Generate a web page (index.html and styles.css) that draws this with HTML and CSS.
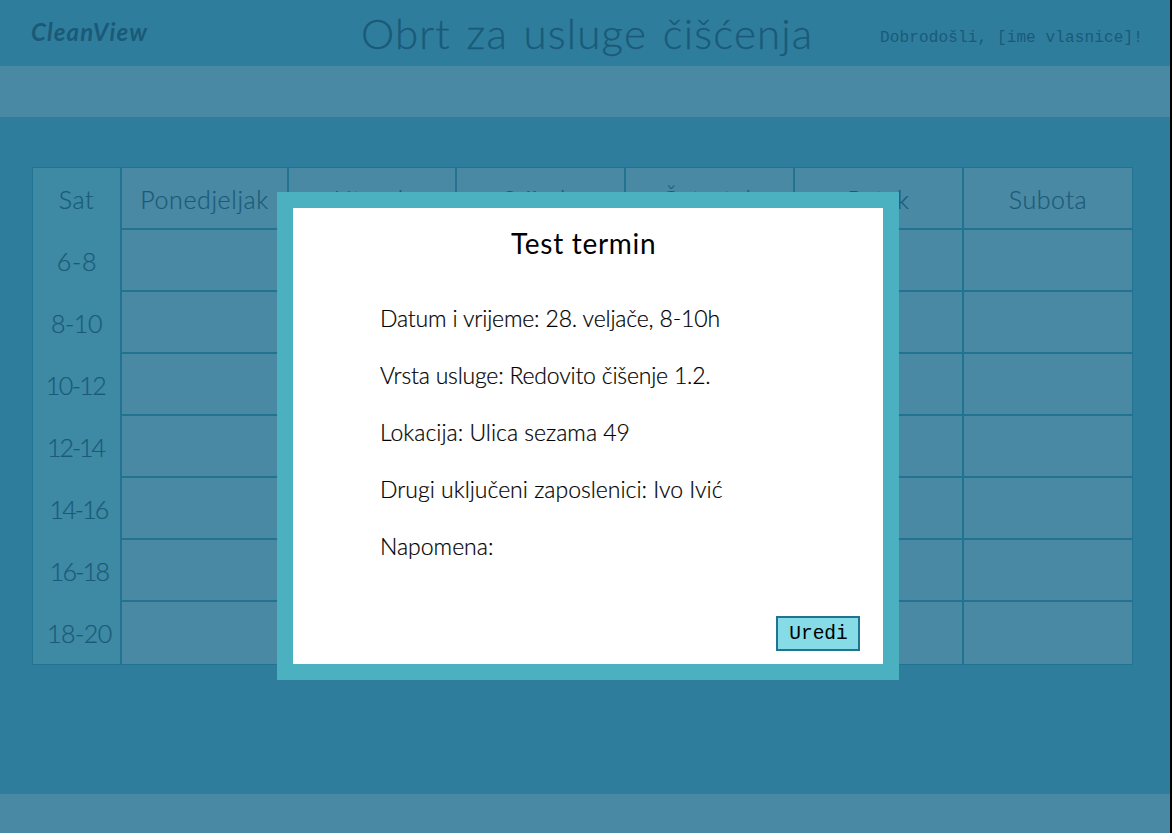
FILE: index.html
```html
<!DOCTYPE html>
<html lang="hr">
<head>
<meta charset="utf-8">
<title>CleanView</title>
<link rel="stylesheet" href="styles.css">
</head>
<body>
<div class="page">
  <header class="header">
    <div class="logo">CleanView</div>
    <h1 class="title">Obrt za usluge čišćenja</h1>
    <div class="welcome">Dobrodošli, [ime vlasnice]!</div>
  </header>
  <nav class="nav"></nav>
  <main class="main">
    <div class="schedule">
      <div class="hours">
        <div class="sat">Sat</div>
        <div class="h6">6-8</div>
        <div class="h8">8-10</div>
        <div class="h10">10-12</div>
        <div class="h12">12-14</div>
        <div class="h14">14-16</div>
        <div class="h16">16-18</div>
        <div class="h18">18-20</div>
      </div>
      <div class="day"><div class="name">Ponedjeljak</div><div></div><div></div><div></div><div></div><div></div><div></div><div></div></div>
      <div class="day"><div class="name">Utorak</div><div></div><div></div><div></div><div></div><div></div><div></div><div></div></div>
      <div class="day"><div class="name">Srijeda</div><div></div><div></div><div></div><div></div><div></div><div></div><div></div></div>
      <div class="day"><div class="name">Četvrtak</div><div></div><div></div><div></div><div></div><div></div><div></div><div></div></div>
      <div class="day"><div class="name">Petak</div><div></div><div></div><div></div><div></div><div></div><div></div><div></div></div>
      <div class="day"><div class="name">Subota</div><div></div><div></div><div></div><div></div><div></div><div></div><div></div></div>
    </div>
  </main>
  <footer class="footer"></footer>
</div>
<section class="modal">
  <h2 class="modal-title">Test termin</h2>
  <div class="details">
    <p class="d1">Datum i vrijeme: 28. veljače, 8-10h</p>
    <p class="d2">Vrsta usluge: Redovito čišenje 1.2.</p>
    <p class="d3">Lokacija: Ulica sezama 49</p>
    <p class="d4">Drugi uključeni zaposlenici: Ivo Ivić</p>
    <p class="d5">Napomena:</p>
  </div>
  <button class="edit">Uredi</button>
</section>
</body>
</html>
```
FILE: styles.css
```css
* { box-sizing: border-box; }
body { margin: 0; background: #000; font-family: Lato, sans-serif; font-weight: 300; overflow: hidden; }
h1, h2, p { margin: 0; font-weight: 300; white-space: nowrap; }
.page { width: 1170px; height: 833px; display: flex; flex-direction: column; background: #2f7d9c; color: #1a5a78; }
.header { height: 66px; display: flex; flex: none; white-space: nowrap; }
.logo { width: 361px; padding: 17px 0 0 31px; font-size: 24px; line-height: 30px; font-style: italic; font-weight: 700; letter-spacing: 1.1px; }
.title { width: 519px; padding-top: 8px; font-size: 42px; line-height: 50px; letter-spacing: 1.2px; word-spacing: 3px; -webkit-text-stroke: 0.3px #1a5a78; }
.welcome { padding-top: 28px; font: 16px/20px "Liberation Mono", monospace; letter-spacing: 0.14px; }
.nav { height: 51px; flex: none; background: #4a89a4; }
.main { flex: 1; padding: 50px 0 0 32px; }
.footer { height: 39px; flex: none; background: #4a89a4; }
.schedule { width: 1101px; height: 498px; display: grid; grid-template-columns: 87px 167px 168px 169px 169px 169px 170px; border: 1px solid #227392; background: #4a89a4; font-size: 25px; line-height: 30px; -webkit-text-stroke: 0.2px #1a5a78; }
.hours { background: #3e89a3; }
.hours div { height: 62px; padding-top: 16px; text-align: center; white-space: nowrap; }
.hours .sat { letter-spacing: 0.6px; }
.hours .h6 { padding-left: 1px; letter-spacing: 0.7px; }
.hours .h8 { letter-spacing: -0.4px; }
.hours .h10 { padding-right: 2px; letter-spacing: -1.6px; }
.hours .h12 { padding-right: 2px; letter-spacing: -2.1px; }
.hours .h14 { padding-left: 4px; letter-spacing: -1.9px; }
.hours .h16 { padding-left: 5px; letter-spacing: -1.8px; }
.hours .h18 { padding-left: 6px; letter-spacing: -0.5px; }
.day { border-left: 2px solid #227392; }
.day div { height: 62px; border-bottom: 2px solid #227392; }
.day div:last-child { border-bottom: 0; }
.day .name { padding-top: 16px; text-align: center; white-space: nowrap; letter-spacing: 0.6px; }
.modal { position: absolute; left: 277px; top: 192px; width: 622px; height: 488px; display: flex; flex-direction: column; border: 16px solid #4bb0bf; background: #fff; color: #000; }
.modal-title { padding: 18px 0 0 218px; font-size: 28px; line-height: 34px; font-weight: 400; letter-spacing: 0.7px; }
.details { padding: 44px 0 0 87px; font-size: 23px; line-height: 28px; display: flex; flex-direction: column; gap: 29px; -webkit-text-stroke: 0.2px #000; }
.details .d1 { letter-spacing: -0.17px; }
.details .d2 { letter-spacing: -0.2px; }
.edit { width: 84px; height: 35px; margin: auto 23px 13px auto; padding: 0 0 0 1px; border: 2px solid #227392; background: #85dce6; color: #000; font: 19.5px/28px "Liberation Mono", monospace; }
```
